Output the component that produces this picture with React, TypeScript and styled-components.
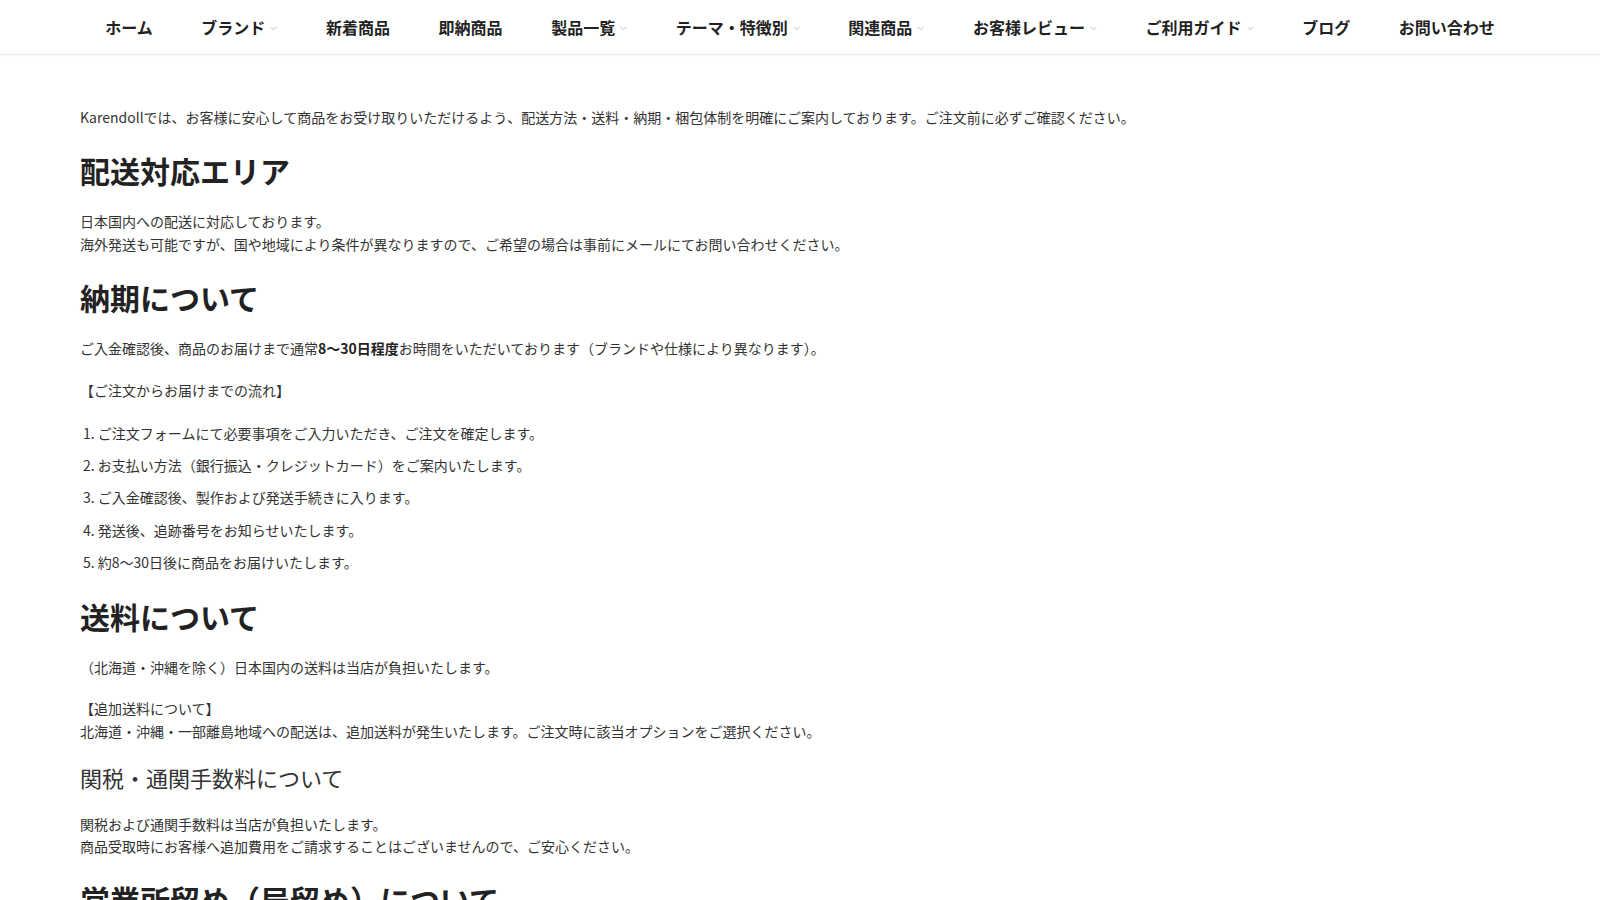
import React from 'react'
import styled, { createGlobalStyle } from 'styled-components'

const GlobalStyle = createGlobalStyle`
  html, body {
    margin: 0;
    padding: 0;
    background: #fff;
  }
  body {
    font-family: "Noto Sans CJK JP", "Noto Sans", sans-serif;
    color: #333;
  }
`

const Header = styled.header`
  height: 54px;
  border-bottom: 1px solid #ececec;
  box-shadow: 0 1px 2px rgba(0, 0, 0, 0.04);
  display: flex;
  justify-content: center;
  align-items: center;
`

const NavList = styled.nav`
  display: flex;
  align-items: center;
  gap: 48.6px;
`

const NavItem = styled.a`
  display: flex;
  align-items: center;
  gap: 5px;
  font-size: 16px;
  font-weight: 700;
  color: #222;
  text-decoration: none;
  white-space: nowrap;
  line-height: 1;
`

const Chevron = styled.svg`
  width: 7px;
  height: 5px;
  margin-top: 2px;
`

const Main = styled.main`
  padding: 51px 80px 40px;
`

const Paragraph = styled.p`
  margin: 0 0 19.5px;
  font-size: 14px;
  line-height: 22.4px;
  color: #333;

  strong {
    font-weight: 700;
    color: #222;
  }
`

const Heading = styled.h2`
  margin: 21px 0 19px;
  font-size: 30px;
  line-height: 42px;
  font-weight: 700;
  color: #222;
`

const SubHeading = styled.h3`
  margin: 19px 0 20px;
  font-size: 22px;
  line-height: 30.8px;
  font-weight: 400;
  color: #333;
`

const Steps = styled.ol`
  margin: 20px 0 20px;
  padding: 0 0 0 3px;
  list-style-position: inside;
`

const Step = styled.li`
  font-size: 14px;
  line-height: 22.4px;
  color: #333;
  margin-bottom: 10px;
`

const navItems: { label: string; menu?: boolean }[] = [
  { label: 'ホーム' },
  { label: 'ブランド', menu: true },
  { label: '新着商品' },
  { label: '即納商品' },
  { label: '製品一覧', menu: true },
  { label: 'テーマ・特徴別', menu: true },
  { label: '関連商品', menu: true },
  { label: 'お客様レビュー', menu: true },
  { label: 'ご利用ガイド', menu: true },
  { label: 'ブログ' },
  { label: 'お問い合わせ' },
]

const steps = [
  'ご注文フォームにて必要事項をご入力いただき、ご注文を確定します。',
  'お支払い方法（銀行振込・クレジットカード）をご案内いたします。',
  'ご入金確認後、製作および発送手続きに入ります。',
  '発送後、追跡番号をお知らせいたします。',
  '約8〜30日後に商品をお届けいたします。',
]

function DownIcon() {
  return (
    <Chevron viewBox="0 0 7 5" fill="none">
      <path d="M0.5 0.8 L3.5 3.8 L6.5 0.8" stroke="#b5b5b5" strokeWidth="0.9" />
    </Chevron>
  )
}

export default function App() {
  return (
    <>
      <GlobalStyle />
      <Header>
        <NavList>
          {navItems.map((item) => (
            <NavItem key={item.label} href="#">
              {item.label}
              {item.menu && <DownIcon />}
            </NavItem>
          ))}
        </NavList>
      </Header>
      <Main>
        <Paragraph>
          Karendollでは、お客様に安心して商品をお受け取りいただけるよう、配送方法・送料・納期・梱包体制を明確にご案内しております。ご注文前に必ずご確認ください。
        </Paragraph>

        <Heading>配送対応エリア</Heading>
        <Paragraph>
          日本国内への配送に対応しております。
          <br />
          海外発送も可能ですが、国や地域により条件が異なりますので、ご希望の場合は事前にメールにてお問い合わせください。
        </Paragraph>

        <Heading>納期について</Heading>
        <Paragraph>
          ご入金確認後、商品のお届けまで通常<strong>8〜30日程度</strong>お時間をいただいております（ブランドや仕様により異なります）。
        </Paragraph>
        <Paragraph>【ご注文からお届けまでの流れ】</Paragraph>
        <Steps>
          {steps.map((s) => (
            <Step key={s}>{s}</Step>
          ))}
        </Steps>

        <Heading>送料について</Heading>
        <Paragraph>（北海道・沖縄を除く）日本国内の送料は当店が負担いたします。</Paragraph>
        <Paragraph>
          【追加送料について】
          <br />
          北海道・沖縄・一部離島地域への配送は、追加送料が発生いたします。ご注文時に該当オプションをご選択ください。
        </Paragraph>

        <SubHeading>関税・通関手数料について</SubHeading>
        <Paragraph>
          関税および通関手数料は当店が負担いたします。
          <br />
          商品受取時にお客様へ追加費用をご請求することはございませんので、ご安心ください。
        </Paragraph>

        <Heading>営業所留め（局留め）について</Heading>
        <Paragraph>営業所留め・郵便局留めでの受け取りをご希望の場合は、ご注文時にお申し付けください。</Paragraph>
      </Main>
    </>
  )
}
